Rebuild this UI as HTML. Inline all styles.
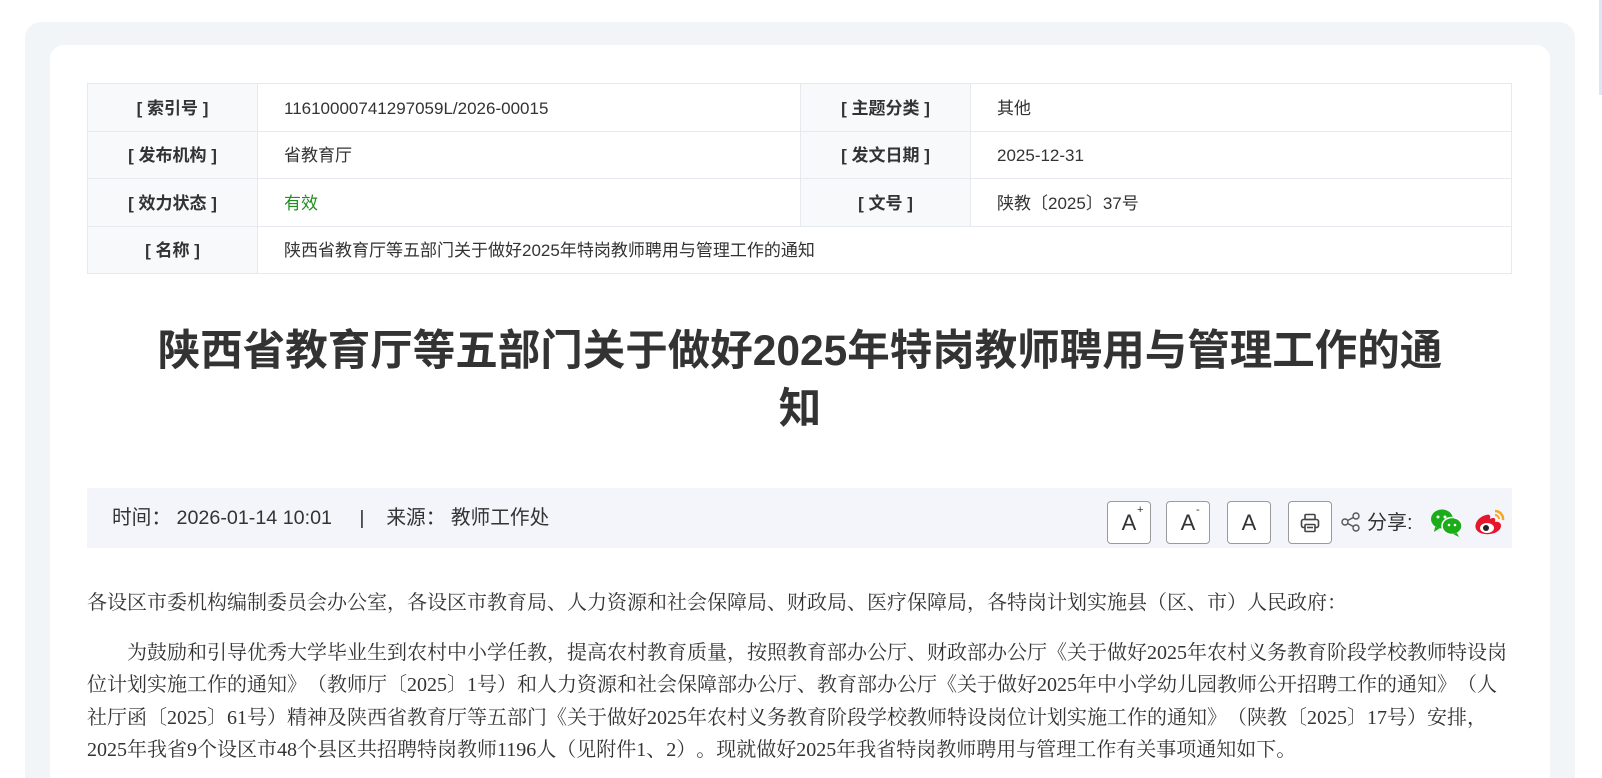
<!DOCTYPE html>
<html><head><meta charset="utf-8"><style>
*{margin:0;padding:0;box-sizing:border-box}
html,body{width:1602px;height:778px;overflow:hidden}
body{background:#fff;font-family:"Liberation Sans","Noto Sans CJK SC",sans-serif;color:#333}
.wrap{position:relative;width:1602px;height:778px;overflow:hidden}
.outer{position:absolute;left:25px;top:22px;width:1550px;height:756px;background:#f2f5f8;border-radius:16px 16px 0 0}
.card{position:absolute;left:50px;top:45px;width:1500px;height:733px;background:#fff;border-radius:14px 14px 0 0}
.sb{position:absolute;left:1599px;top:0;width:3px;height:95px;background:#dce6f5}
table{position:absolute;left:87px;top:83px;width:1425px;border-collapse:collapse;font-size:17px;table-layout:fixed}
td{border:1px solid #e6e9ed;height:47.5px;padding:3px 0 0 26px;vertical-align:middle;line-height:20px}
td.l{background:#f7f9fb;font-weight:bold;text-align:center;padding:3px 0 0 0;font-size:17px}
.title{position:absolute;left:80px;width:1440px;top:323px;text-align:center;font-size:42.5px;font-weight:bold;line-height:58px;color:#333}
.meta{position:absolute;left:87px;top:488px;width:1425px;height:60px;background:#f4f5fb;font-size:19.7px;line-height:60px;padding-left:25px;color:#333}
.btn{position:absolute;top:501px;width:44px;height:43px;border:1px solid #9a9a9a;border-radius:4px;background:#fff;text-align:center;font-size:22px;line-height:41px;color:#333}
.btn sup{font-size:11px;position:absolute;top:-12px;left:29px}
.body{position:absolute;left:87px;top:587px;width:1424px;font-family:"Liberation Serif","Noto Serif CJK SC",serif;font-size:20px;line-height:32.5px;color:#333;text-spacing-trim:space-all}
.body p{margin-bottom:17px}
</style></head><body><div class="wrap">
<div class="outer"></div><div class="card"></div><div class="sb"></div>
<table>
<colgroup><col style="width:170px"><col style="width:543px"><col style="width:170px"><col></colgroup>
<tr><td class="l">[ 索引号 ]</td><td>11610000741297059L/2026-00015</td><td class="l">[ 主题分类 ]</td><td>其他</td></tr>
<tr><td class="l">[ 发布机构 ]</td><td>省教育厅</td><td class="l">[ 发文日期 ]</td><td>2025-12-31</td></tr>
<tr><td class="l">[ 效力状态 ]</td><td style="color:#1f8f1f">有效</td><td class="l">[ 文号 ]</td><td>陕教〔2025〕37号</td></tr>
<tr><td class="l">[ 名称 ]</td><td colspan="3">陕西省教育厅等五部门关于做好2025年特岗教师聘用与管理工作的通知</td></tr>
</table>
<div class="title">陕西省教育厅等五部门关于做好2025年特岗教师聘用与管理工作的通<br>知</div>
<div class="meta">时间：&nbsp;2026-01-14 10:01&nbsp;&nbsp;&nbsp;&nbsp;&nbsp;|&nbsp;&nbsp;&nbsp;&nbsp;来源：&nbsp;教师工作处</div>
<div class="btn" style="left:1107px">A<sup>+</sup></div>
<div class="btn" style="left:1166px">A<sup>-</sup></div>
<div class="btn" style="left:1227px">A</div>
<div class="btn" style="left:1288px"><svg width="22" height="22" viewBox="0 0 22 22" style="margin-top:10px" fill="none" stroke="#444" stroke-width="1.6"><rect x="6" y="2.5" width="10" height="5" rx="1"/><rect x="2.5" y="7.5" width="17" height="8" rx="2"/><rect x="6" y="12.5" width="10" height="7" rx="1" fill="#fff"/><line x1="8" y1="15.5" x2="14" y2="15.5"/></svg></div>
<svg style="position:absolute;left:1340px;top:511px" width="22" height="22" viewBox="0 0 22 22" fill="none" stroke="#555" stroke-width="1.4"><circle cx="5" cy="11" r="3"/><circle cx="16" cy="5" r="3"/><circle cx="16" cy="17" r="3"/><line x1="7.6" y1="9.5" x2="13.4" y2="6.5"/><line x1="7.6" y1="12.5" x2="13.4" y2="15.5"/></svg>
<div style="position:absolute;left:1367px;top:508px;font-size:20px;line-height:30px;color:#333">分享:</div>
<svg style="position:absolute;left:1430px;top:508px" width="34" height="30" viewBox="0 0 34 30"><ellipse cx="12" cy="11" rx="11" ry="9.5" fill="#1aad19"/><path d="M5 19 L4 24 L10 20Z" fill="#1aad19"/><ellipse cx="22" cy="18" rx="10" ry="8.5" fill="#1aad19" stroke="#fff" stroke-width="1.5"/><path d="M27 25 L29 29 L23 26Z" fill="#1aad19"/><circle cx="8" cy="9" r="1.5" fill="#fff"/><circle cx="15" cy="9" r="1.5" fill="#fff"/><circle cx="19" cy="17" r="1.3" fill="#fff"/><circle cx="25" cy="17" r="1.3" fill="#fff"/></svg>
<svg style="position:absolute;left:1473px;top:507px" width="34" height="30" viewBox="0 0 34 30"><path d="M13 8 C5 10 1 17 3 22 C6 29 22 29 27 22 C30 17 26 14 22 15 C23 11 21 10 17 12 C18 8 16 7 13 8Z" fill="#e6162d"/><ellipse cx="14" cy="21" rx="7" ry="5" fill="#fff"/><circle cx="13" cy="21" r="3" fill="#222"/><path d="M22 4 A8 8 0 0 1 30 13" stroke="#f5a623" stroke-width="2.5" fill="none"/><path d="M22 8 A4 4 0 0 1 26 12" stroke="#f5a623" stroke-width="2" fill="none"/></svg>
<div class="body">
<p>各设区市委机构编制委员会办公室，各设区市教育局、人力资源和社会保障局、财政局、医疗保障局，各特岗计划实施县（区、市）人民政府：</p>
<p style="text-indent:2em">为鼓励和引导优秀大学毕业生到农村中小学任教，提高农村教育质量，按照教育部办公厅、财政部办公厅《关于做好2025年农村义务教育阶段学校教师特设岗位计划实施工作的通知》（教师厅〔2025〕1号）和人力资源和社会保障部办公厅、教育部办公厅《关于做好2025年中小学幼儿园教师公开招聘工作的通知》（人社厅函〔2025〕61号）精神及陕西省教育厅等五部门《关于做好2025年农村义务教育阶段学校教师特设岗位计划实施工作的通知》（陕教〔2025〕17号）安排，2025年我省9个设区市48个县区共招聘特岗教师1196人（见附件1、2）。现就做好2025年我省特岗教师聘用与管理工作有关事项通知如下。</p>
</div>
</div></body></html>
